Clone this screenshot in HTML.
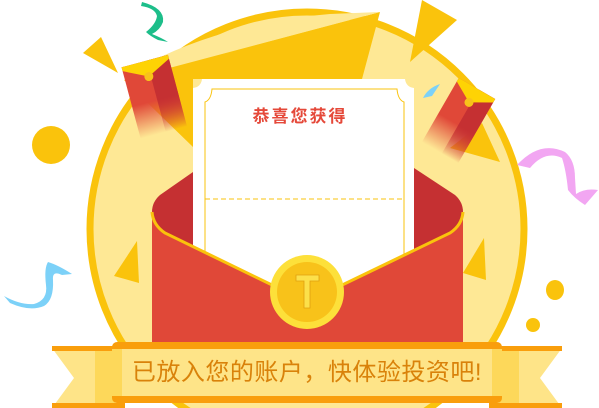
<!DOCTYPE html>
<html><head><meta charset="utf-8"><style>
html,body{margin:0;padding:0;background:#fff;width:599px;height:408px;overflow:hidden}
svg{display:block}
</style></head><body>
<svg width="599" height="408" viewBox="0 0 599 408" xmlns="http://www.w3.org/2000/svg" style="position:absolute;left:0;top:0">
<defs>
<linearGradient id="fadeL" x1="0" y1="0" x2="0" y2="1"><stop offset="0" stop-color="#E04838"/><stop offset="0.55" stop-color="#E04838"/><stop offset="1" stop-color="#E04838" stop-opacity="0"/></linearGradient>
<linearGradient id="fadeD" x1="0" y1="0" x2="0" y2="1"><stop offset="0" stop-color="#C53032"/><stop offset="0.55" stop-color="#C53032"/><stop offset="1" stop-color="#C53032" stop-opacity="0"/></linearGradient>
</defs>
<circle cx="307" cy="229" r="217" fill="#FEE895" stroke="#FAC30C" stroke-width="7"/>
<polygon points="124,80 380,12 362,79 193,79 193,147" fill="#FAC30C"/>
<path d="M150,62 Q230,22 330,14 L380,12 L175,66 Z" fill="#FEE895"/>
<polygon points="422,0 457,20 410,62" fill="#FAC30C"/>
<polygon points="83,53 101,37 118,73" fill="#FAC30C"/>
<polygon points="482,123 500,162 450,148" fill="#FAC30C"/>
<polygon points="137,241 139,283 114,276" fill="#FAC30C"/>
<polygon points="484,238 486,280 463,273" fill="#FAC30C"/>
<circle cx="51" cy="145" r="19" fill="#FAC30C"/>
<ellipse cx="555" cy="290" rx="9" ry="10" fill="#FAC30C"/>
<ellipse cx="533" cy="325" rx="7" ry="7" fill="#FAC30C"/>
<path d="M142,2 Q165,8 163,22 Q160,30 152,34 Q162,38 168,42 L158,40 Q150,36 146,32 Q156,24 157,16 Q155,8 141,6 Z" fill="#1DBE8A"/>
<path d="M4,296 Q20,305 34,304 Q48,300 46,285 Q44,268 48,262 Q58,265 72,274 L62,275 Q52,270 53,280 Q54,300 44,306 Q30,312 10,303 Z" fill="#7CD1F8"/>
<path d="M517,165 Q540,140 565,152 Q575,160 575,178 L576,194 Q585,188 598,190 L585,205 Q574,198 568,190 Q566,170 562,158 Q545,150 530,168 Z" fill="#F2A6F2"/>
<path d="M423,98 Q428,88 440,84 L432,96 Z" fill="#7CD1F8"/>
<g transform="translate(153,92) rotate(-15)">
<rect x="-24" y="-32" width="48" height="74" fill="url(#fadeL)"/>
<rect x="2" y="-32" width="22" height="74" fill="url(#fadeD)"/>
<polygon points="-24,-32 24,-32 24,-28 0,-16 -24,-28" fill="#FED304"/>
<circle cx="0" cy="-16" r="4.5" fill="#F8C21A"/>
</g>
<g transform="translate(460,118) rotate(30)">
<rect x="-21" y="-34" width="42" height="74" fill="url(#fadeL)"/>
<rect x="2" y="-34" width="19" height="74" fill="url(#fadeD)"/>
<polygon points="-21,-34 21,-34 21,-30 0,-18 -21,-30" fill="#FED304"/>
<circle cx="0" cy="-18" r="4.5" fill="#F8C21A"/>
</g>
<path d="M193,172 L160,195 Q152,202 152,212 L152,342 L463,342 L463,212 Q463,202 455,195 L414,168 Z" fill="#C53032"/>
<path d="M202,79 L405,79 Q406,87 414,88 L414,330 L193,330 L193,88 Q201,87 202,79 Z" fill="#fff"/>
<path d="M212,89 L397,89 Q398,100 404,102 L404,300 L205,300 L205,102 Q211,100 212,89 Z" fill="none" stroke="#FAC30C" stroke-width="1"/>
<line x1="205" y1="199" x2="404" y2="199" stroke="#FAC30C" stroke-width="1" stroke-dasharray="5,3"/>
<text x="300" y="122" text-anchor="middle" font-family="'Liberation Sans','Noto Sans CJK SC',sans-serif" font-size="17" font-weight="bold" fill="#E5493A" letter-spacing="2">恭喜您获得</text>
<path d="M152,212 Q153,225 165,233 L307,302 L450,233 Q462,225 463,212 L463,342 L152,342 Z" fill="#E04838"/>
<path d="M152,212 Q153,225 165,233 L307,302 L450,233 Q462,225 463,212" fill="none" stroke="#FAC30C" stroke-width="3"/>
<circle cx="307" cy="292" r="37" fill="#FDE03A"/>
<circle cx="307" cy="292" r="30" fill="#F8C21A"/>
<path d="M296,275 L319,275 L319,281 L310,281 L310,308 L304,308 L304,281 L296,281 Z" fill="#FCE04A" stroke="#E0A010" stroke-width="0.8"/>
<polygon points="52,348 125,348 125,408 52,408 74,378" fill="#FEE488"/>
<rect x="95" y="348" width="20" height="60" fill="#FDD85A"/>
<rect x="52" y="346" width="73" height="5" fill="#F99E0C"/>
<rect x="52" y="403" width="73" height="5" fill="#F99E0C"/>
<polygon points="562,348 489,348 489,408 562,408 540,378" fill="#FEE488"/>
<rect x="499" y="348" width="20" height="60" fill="#FDD85A"/>
<rect x="489" y="346" width="73" height="5" fill="#F99E0C"/>
<rect x="489" y="403" width="73" height="5" fill="#F99E0C"/>
<rect x="112" y="342" width="390" height="61" rx="5" fill="#F99E0C"/>
<rect x="112" y="349" width="390" height="47" fill="#FEE488"/>
<rect x="112" y="349" width="10" height="47" fill="#FDD85A"/>
<rect x="492" y="349" width="10" height="47" fill="#FDD85A"/>
<text x="307" y="380" text-anchor="middle" font-family="'Liberation Sans','Noto Sans CJK SC',sans-serif" font-size="24" fill="#D9820A" letter-spacing="0.5">已放入您的账户，快体验投资吧!</text>
</svg>
</body></html>
